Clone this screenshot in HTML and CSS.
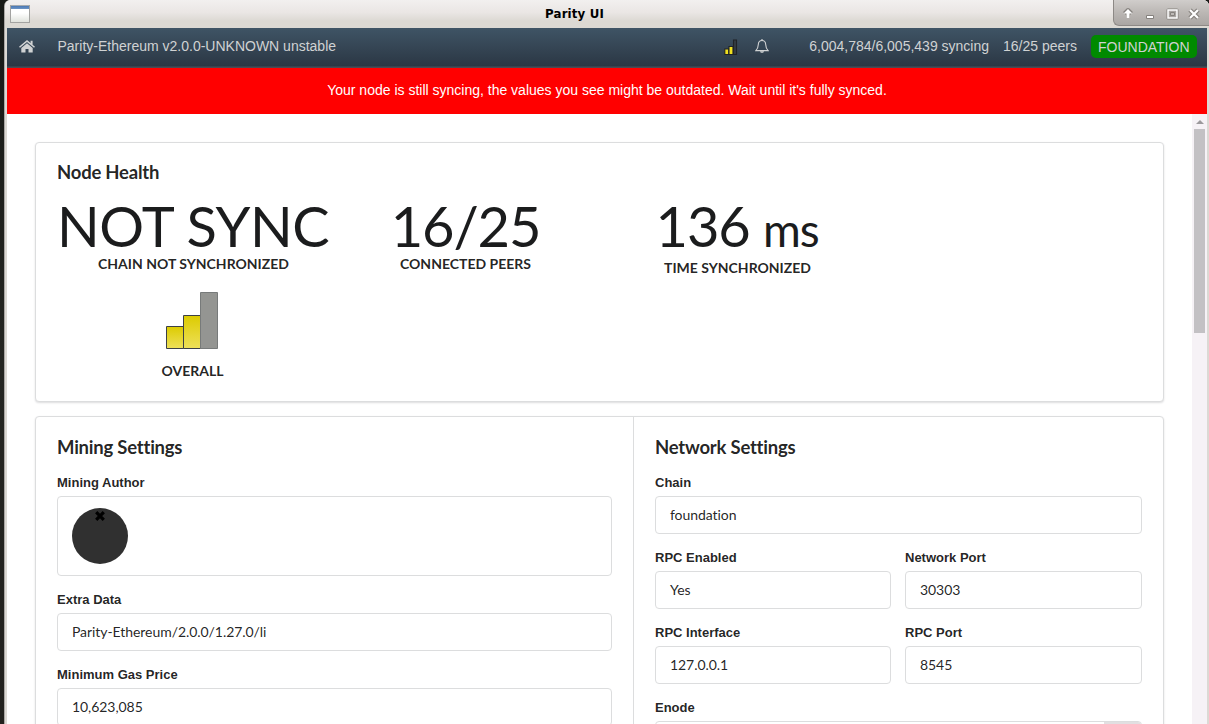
FILE: index.html
```html
<!DOCTYPE html>
<html lang="en">
<head>
<meta charset="utf-8">
<title>Parity UI</title>
<link rel="stylesheet" href="styles.css">
</head>
<body>
<div class="window">
  <header class="titlebar">
    <span class="app-icon"></span>
    <span class="title">Parity UI</span>
    <div class="controls">
      <svg width="96" height="26" viewBox="1 0 96 26">
        <g fill="none" stroke="#85817d" stroke-width="4" stroke-linejoin="round">
          <path d="M15 18v-7M11.500 13.500L15 10l3.500 3.500"/>
          <path d="M55 10h9v8h-9z" stroke-width="3"/>
          <path d="M77 10l8 8M85 10l-8 8" stroke-width="4.500"/>
        </g>
        <path d="M33.500 15.500h7v3h-7z" fill="#fff" stroke="#85817d"/>
        <path d="M15 9l4.500 4.500h-3V18h-3v-4.500h-3z" fill="#fff"/>
        <path d="M55 10h9v8h-9z" fill="#aaa6a3" stroke="#fff" stroke-width="1.500"/>
        <path d="M57.500 12.500h4v3h-4z" fill="#bdb9b6" stroke="#85817d"/>
        <path d="M77 10l8 8M85 10l-8 8" stroke="#fff" stroke-width="2.200"/>
      </svg>
    </div>
  </header>
  <div class="app">
    <nav class="navbar">
      <svg class="home" width="16" height="13" viewBox="0 0 16 13"><path d="M8 3.200L2.300 8v4.400h4.200V9h3v3.400h4.200V8z"/><path d="M8 0L0 6.700l1 1.100 7-5.900 7 5.900 1-1.100-2.400-2V.7h-2v2.300z"/></svg>
      <span class="version">Parity-Ethereum v2.0.0-UNKNOWN unstable</span>
      <svg class="signal-small" width="14" height="17" viewBox="0 0 14 17">
        <g stroke="#202327" stroke-width="1.100"><path d="M.8 10h4v5.500h-4z" fill="#f0e020"/><path d="M5 7.500h4v8H5z" fill="#f0e020"/><path d="M9.500 1h3v14.500h-3z" fill="#343b43"/></g>
      </svg>
      <svg class="bell" width="14" height="15" viewBox="0 0 14 15"><path d="M7 1.500C4.500 1.500 3.400 3.300 3.300 5.500 3.200 8.500 2.500 10 .9 11.600h12.200C11.500 10 10.800 8.500 10.700 5.500 10.600 3.300 9.500 1.500 7 1.500z" fill="none" stroke="#d0d2d3" stroke-width="1.100"/><path d="M6.400 0h1.200v1.500H6.400zM5 12.300h4c-.2 2-3.800 2-4 0z" fill="#d0d2d3"/></svg>
      <span class="sync">6,004,784/6,005,439 syncing</span>
      <span class="peers">16/25 peers</span>
      <span class="network">FOUNDATION</span>
    </nav>
    <div class="warning">Your node is still syncing, the values you see might be outdated. Wait until it's fully synced.</div>
    <div class="viewport">
      <main class="content">
        <section class="card health">
          <h3>Node Health</h3>
          <div class="stats">
            <div class="stat"><div class="value">NOT SYNC</div><div class="label">Chain not synchronized</div></div>
            <div class="stat"><div class="value count">16/25</div><div class="label">Connected peers</div></div>
            <div class="stat"><div class="value timed">136 <small>ms</small></div><div class="label">Time synchronized</div></div>
            <div class="stat overall">
              <svg width="54" height="60" viewBox="0 0 54 60">
                <defs><linearGradient id="bar" x1="0" y1="0" x2="0" y2="1"><stop offset="0" stop-color="#dccb00"/><stop offset="1" stop-color="#eee05a"/></linearGradient></defs>
                <g stroke="#3c4046"><path d="M1.500 35.500h17v22h-17z" fill="url(#bar)"/><path d="M18.500 24.500h17v33h-17z" fill="url(#bar)"/><path d="M35.500 1.500h17v56h-17z" fill="#949592" stroke="#777a7a"/></g>
              </svg>
              <div class="label">Overall</div>
            </div>
          </div>
        </section>
        <section class="card settings">
          <div class="column mining">
            <h3>Mining Settings</h3>
            <div class="field"><label>Mining Author</label><div class="input author"><span class="avatar"><svg width="10" height="10" viewBox="0 0 10 10"><path d="M1.200 1.200l7.600 7.600M8.800 1.200l-7.600 7.600" stroke="#000" stroke-width="3.200"/></svg></span></div></div>
            <div class="field"><label>Extra Data</label><div class="input">Parity-Ethereum/2.0.0/1.27.0/li</div></div>
            <div class="field"><label>Minimum Gas Price</label><div class="input">10,623,085</div></div>
          </div>
          <div class="column">
            <h3>Network Settings</h3>
            <div class="field"><label>Chain</label><div class="input">foundation</div></div>
            <div class="pair">
              <div class="field"><label>RPC Enabled</label><div class="input">Yes</div></div>
              <div class="field"><label>Network Port</label><div class="input">30303</div></div>
            </div>
            <div class="pair">
              <div class="field"><label>RPC Interface</label><div class="input">127.0.0.1</div></div>
              <div class="field"><label>RPC Port</label><div class="input">8545</div></div>
            </div>
            <div class="field"><label>Enode</label><div class="input enode"><span class="copy"></span></div></div>
          </div>
        </section>
      </main>
      <div class="scrollbar"><span class="arrow"></span><span class="thumb"></span></div>
    </div>
  </div>
</div>
</body>
</html>
```
FILE: styles.css
```css
* { box-sizing: border-box; }
body {
  margin: 0;
  height: 724px;
  overflow: hidden;
  background: linear-gradient(#171916, #252622 50%, #22211e);
  font: 14px/20px Lato, sans-serif;
  font-variant-ligatures: none;
  color: rgba(0, 0, 0, .87);
}
.window {
  height: 724px;
  margin-left: 4px;
  display: flex;
  flex-direction: column;
  background: #dcd9d4;
  border-left: 1px solid #aaa7a4;
  border-radius: 6px 6px 0 0;
  overflow: hidden;
}
.titlebar {
  flex: none;
  height: 28px;
  display: grid;
  grid-template-columns: 96px 1fr 96px;
  background: linear-gradient(#f2f0ef, #eae6e4 45%, #dcd9d3 75%, #dcd9d3);
}
.app-icon {
  width: 20px;
  height: 18px;
  margin: 5px 0 0 5px;
  border: 1px solid #a3a3a1;
  border-top: 0;
  background: linear-gradient(#a4a9ae 1px, #4978b4 1px, #6d94c4 4px, #fff 4px, #fff 8px, #e1e3dd);
}
.title {
  padding-right: 65px;
  text-align: center;
  font: bold 11.8px/28px "DejaVu Sans", sans-serif;
  letter-spacing: .15px;
  color: #000;
}
.controls {
  height: 26px;
  border: 1px solid #8d8986;
  border-width: 0 0 1px 1px;
  border-radius: 0 0 0 6px;
  background: linear-gradient(#d0cdcb, #bbb7b4 50%, #aaa6a3);
}
.controls svg { display: block; }
.app {
  flex: 1;
  min-height: 0;
  margin: 0 2px;
  display: flex;
  flex-direction: column;
  background: #fff;
}
.navbar {
  flex: none;
  height: 40px;
  padding: 0 10px 3px 12px;
  display: flex;
  align-items: center;
  background: linear-gradient(#3f5465, #2b3744 38px, #46505b 39px, #584248);
  color: #d0d2d3;
  font: 14px/20px "Liberation Sans", Arial, sans-serif;
}
.navbar span { white-space: nowrap; }
.home { fill: #d0d2d3; margin-right: 22.500px; }
.version { flex: 1; padding-bottom: 1px; }
.signal-small { margin: 1px 17px 0 0; }
.bell { margin-right: 40px; }
.sync, .peers { margin-right: 14px; padding-bottom: 1px; }
.network {
  height: 23px;
  padding: 0 7.500px 0 7px;
  line-height: 24px;
  border-radius: 5px;
  background: #008a00;
}
.warning {
  flex: none;
  height: 46px;
  background: #f00;
  color: #fff;
  text-align: center;
  font: 14px/44px "Liberation Sans", Arial, sans-serif;
}
.viewport {
  flex: 1;
  min-height: 0;
  display: flex;
  overflow: hidden;
}
.content { flex: 1; padding: 28px; }
.card {
  border: 1px solid #dcddde;
  border-radius: 4px;
  box-shadow: 0 1px 2px rgba(34, 36, 38, .15);
  background: #fff;
}
.health { height: 260px; margin-bottom: 14px; padding: 18px 21px; }
h3 {
  margin: 0;
  font: bold 18.500px/23px Lato, sans-serif;
  letter-spacing: -.22px;
}
.stats {
  margin-top: 14px;
  display: grid;
  grid-template-columns: repeat(3, 272px);
  row-gap: 13px;
}
.stat { text-align: center; }
.value {
  height: 56px;
  font-size: 56px;
  line-height: 56px;
  letter-spacing: -.5px;
  color: #1b1c1d;
  white-space: nowrap;
}
.count { letter-spacing: -1.100px; padding-left: 1px; }
.timed { height: 60px; letter-spacing: -1.100px; }
.value small { font-size: 46px; line-height: 1; }
.label { font-weight: bold; text-transform: uppercase; padding-left: 1px; }
.overall svg { display: block; margin: 0 auto 10px; }
.overall { padding-right: 2px; }
.settings {
  display: grid;
  grid-template-columns: 598px 1fr;
  height: 500px;
}
.column { padding: 19px 21px 18px; }
.mining { border-right: 1px solid #dcddde; }
.column h3 { margin-bottom: 14px; }
.field { margin-bottom: 14px; }
.field label {
  display: block;
  margin-bottom: 4px;
  font: bold 13px/19px "Liberation Sans", Arial, sans-serif;
}
.input {
  height: 38px;
  padding: 0 14px;
  border: 1px solid #dcddde;
  border-radius: 4px;
  line-height: 36px;
  letter-spacing: -.06px;
}
.author { height: 80px; padding-top: 11px; }
.avatar {
  width: 56px;
  height: 56px;
  padding-top: 3px;
  display: flex;
  justify-content: center;
  border-radius: 50%;
  background: #303030;
}
.pair { display: grid; grid-template-columns: 236px 1fr; column-gap: 14px; }
.enode { padding: 0; display: flex; justify-content: flex-end; overflow: hidden; }
.copy { width: 37px; background: #e2dfe1; }
.scrollbar {
  width: 15px;
  display: flex;
  flex-direction: column;
  align-items: center;
  background: #f6f2f6;
}
.arrow {
  margin: 6px 0 5px;
  border: 4px solid transparent;
  border-top: 0;
  border-bottom-color: #9c999c;
}
.thumb { width: 11px; height: 204px; background: #c3c1c4; }
```
